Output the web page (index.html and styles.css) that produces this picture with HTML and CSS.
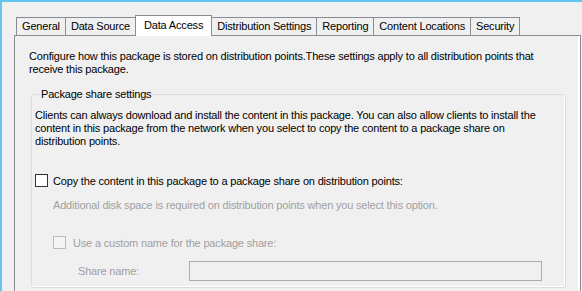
FILE: index.html
```html
<!DOCTYPE html>
<html lang="en">
<head>
  <meta charset="UTF-8" />
  <title>Package Properties | Data Access</title>
  <link rel="stylesheet" href="styles.css">
</head>
<body>

  <div class="window">
    <!-- Tab strip -->
    <div class="tabs">
      <div class="tab">General</div>
      <div class="tab">Data Source</div>
      <div class="tab active">Data Access</div>
      <div class="tab">Distribution Settings</div>
      <div class="tab">Reporting</div>
      <div class="tab">Content Locations</div>
      <div class="tab">Security</div>
    </div>

    <!-- Data Access page -->
    <div class="panel">
      <p class="intro">
        Configure how this package is stored on distribution points.These settings apply to all distribution points that<br>
        receive this package.
      </p>

      <fieldset class="group">
        <legend>Package share settings</legend>
        <p>
          Clients can always download and install the content in this package. You can also allow clients to install the<br>
          content in this package from the network when you select to copy the content to a package share on<br>
          distribution points.
        </p>

        <label class="check">
          <span class="box"></span>
          Copy the content in this package to a package share on distribution points:
        </label>

        <p class="note">Additional disk space is required on distribution points when you select this option.</p>

        <label class="check disabled">
          <span class="box"></span>
          Use a custom name for the package share:
        </label>

        <div class="share-row">
          <span class="share-label">Share name:</span>
          <span class="textbox"></span>
        </div>
      </fieldset>
    </div>
  </div>

</body>
</html>
```

FILE: styles.css
```css
* {
  box-sizing: border-box;
}

body {
  margin: 0;
  height: 291px;
  overflow: hidden;
  background-color: #f0f0f0;
  border-top: 2px solid #64c6ef;
  border-left: 2px solid #64c6ef;
  font-family: "Liberation Sans", Arial, sans-serif;
  font-size: 11px;
  letter-spacing: -0.18px;
  color: #000;
}

.window {
  padding: 13px 1px 0 12px;
}

/* Tabs */
.tabs {
  display: flex;
  align-items: flex-end;
  height: 20px;
  margin-left: 3px;
}

.tab {
  height: 18px;
  line-height: 17px;
  padding: 0 5px;
  margin-left: -1px;
  border: 1px solid #898c95;
  border-bottom: none;
  background-color: #f0f0f0;
  white-space: nowrap;
}

.tab.active {
  position: relative;
  z-index: 1;
  height: 21px;
  line-height: 18px;
  padding: 0 8px;
  margin-bottom: -1px;
  background-color: #fff;
}

/* Page */
.panel {
  padding: 14px 13px 4px 14px;
  border: 1px solid #898c95;
  box-shadow: inset -2px 0 0 #fff;
}

.panel p {
  margin: 0;
  line-height: 13px;
}

.group {
  margin: 12px 1px 0 2px;
  padding: 8px 3px 6px 3px;
  border: 1px solid #d5dfe5;
  border-radius: 3px;
  box-shadow: inset -1px -1px 0 #fff;
}

.group legend {
  margin-left: 5px;
  padding: 0 1px;
  line-height: 13px;
}

.check {
  display: flex;
  align-items: center;
  gap: 5px;
  height: 13px;
  margin-top: 26px;
}

.check .box {
  width: 13px;
  height: 13px;
  border: 1px solid #333;
  background-color: #fff;
}

.note {
  margin: 12px 0 0 18px !important;
  color: #a0a0a0;
}

.check.disabled {
  gap: 7px;
  margin: 24px 0 0 18px;
  color: #a0a0a0;
}

.check.disabled .box {
  border-color: #bcbcbc;
  background-color: #f4f4f4;
}

.share-row {
  display: flex;
  align-items: center;
  margin: 12px 0 0 43px;
  color: #a0a0a0;
}

.share-label {
  width: 111px;
}

.textbox {
  width: 353px;
  height: 20px;
  border: 1px solid #ababab;
  background-color: #f0f0f0;
}
```
